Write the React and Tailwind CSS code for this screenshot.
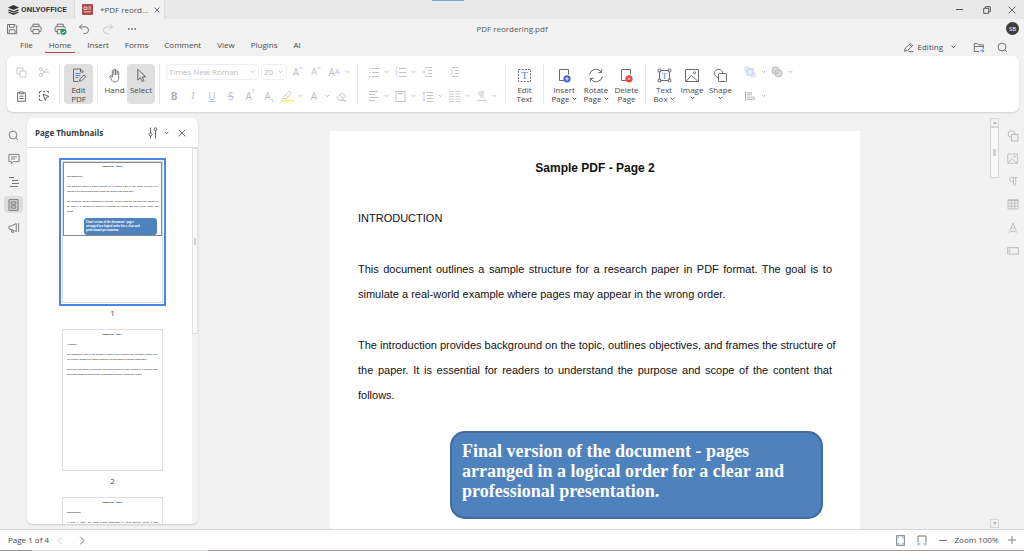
import clsx from 'clsx'

const Icon = ({ w = 12, h = w, box, className, children }) => (
  <svg
    width={w}
    height={h}
    viewBox={box || `0 0 ${w} ${h}`}
    fill="none"
    stroke="currentColor"
    aria-hidden="true"
    className={clsx('shrink-0', className)}
  >
    {children}
  </svg>
)

const Chevron = ({ className }) => (
  <Icon w={5} h={4} className={className}>
    <path d="M0.7 0.8 2.5 2.7 4.3 0.8" />
  </Icon>
)

const icons = {
  stack: (
    <Icon w={11} h={10} className="text-[#333333]">
      <path d="M5.5 0 11 2.5 5.5 5 0 2.5Z" fill="currentColor" stroke="none" />
      <path d="M0.5 4.8 5.5 7 10.5 4.8M0.5 7 5.5 9.2 10.5 7" strokeWidth="1.3" />
    </Icon>
  ),
  pdfTab: (
    <Icon w={11}>
      <rect width="11" height="11" rx="1" fill="#b04a4a" stroke="none" />
      <path d="M2 3h3v2.5H2zM6.3 3H9M6.3 5H9M2 7.8h7" stroke="#f3dada" strokeWidth="0.9" />
    </Icon>
  ),
  save: (
    <Icon w={12}>
      <path d="M1.5 1.5h7.6l1.6 1.6v7.6H1.5zM3.5 1.5v2.8h4.7V1.5M3.2 10.5V6.8h5.8v3.7" strokeWidth="0.9" />
    </Icon>
  ),
  print: (
    <Icon w={12}>
      <path d="M3 3.6V1.2h6v2.4M3 8.6H1.7q-.8 0-.8-.8V4.6q0-.9.9-.9h8.4q.9 0 .9.9v3.2q0 .8-.8.8H9M3 6.5h6v4.2H3z" strokeWidth="0.9" />
    </Icon>
  ),
  quickPrint: (
    <Icon w={13} h={12}>
      <path d="M3.2 3.6V1.2h6v2.4M3.2 8.6H1.9q-.8 0-.8-.8V4.6q0-.9.9-.9h8.4q.9 0 .9.9v1M3.2 10.7V6.5h5M3.2 10.7h2.6" strokeWidth="0.9" />
      <circle cx="9.4" cy="8.8" r="3.1" fill="#2f9a60" stroke="none" />
      <path d="m8 8.8 1.1 1.1 1.8-2" stroke="#fff" strokeWidth="0.9" />
    </Icon>
  ),
  undo: (
    <Icon w={12}>
      <path d="M4.2 1.2 1.5 3.9l2.7 2.7M1.6 3.9h5.6a3.3 3.3 0 0 1 0 6.6H5.4" strokeWidth="0.9" />
    </Icon>
  ),
  redo: (
    <Icon w={12}>
      <path d="m7.8 1.2 2.7 2.7-2.7 2.7M10.4 3.9H4.8a3.3 3.3 0 0 0 0 6.6h1.8" strokeWidth="0.9" />
    </Icon>
  ),
  more: (
    <Icon w={10} h={4}>
      <path d="M1 2h1.6M4.2 2h1.6M7.4 2H9" strokeWidth="1.6" />
    </Icon>
  ),
  copy: (
    <Icon w={11}>
      <path d="M3.5 7H1V1h6v2.5M4 4h6v6H4z" strokeWidth="0.9" />
    </Icon>
  ),
  cut: (
    <Icon w={12}>
      <circle cx="3" cy="3.2" r="1.6" strokeWidth="0.9" />
      <circle cx="3" cy="9" r="1.6" strokeWidth="0.9" />
      <path d="m4.3 4.2 2 1.9H11M4.3 8l5-5.5" strokeWidth="0.9" />
    </Icon>
  ),
  paste: (
    <Icon w={11}>
      <path d="M3.5 1.7H1.6v8.6h7.8V1.7H7.5M3.6 1h3.8v1.8H3.6zM3.5 5.2h4M3.5 7.5h4" />
    </Icon>
  ),
  selectAll: (
    <Icon w={12}>
      <path d="M1.5 3.5v-2h2M5 1.5h2M8.5 1.5h2v1.5M1.5 5v2M1.5 8.5v2h2" />
      <path d="m5 4.3 6 2.2-2.6 1-1.1 2.9Z" />
    </Icon>
  ),
  editPdf: (
    <Icon w={14} h={15}>
      <path d="M11.5 4V3.8L8.7 1H1.5v12.5h5M8.5 1v3h3" />
      <path d="M3.5 5.5h5M3.5 7.5h5M3.5 9.5h3" stroke="#5b87dc" />
      <path d="m7.5 13.3.6-2.4 4-4 1.7 1.7-4 4Z" />
    </Icon>
  ),
  hand: (
    <Icon w={12} h={15}>
      <path
        d="M3.3 8V3.2a.8.8 0 0 1 1.6 0V7M4.9 3V1.8a.8.8 0 0 1 1.6 0V7M6.5 3a.8.8 0 0 1 1.6 0v4M8.1 4.2a.8.8 0 0 1 1.6 0v5.3c0 3-1.3 4.5-3.6 4.5-2 0-2.8-.8-3.6-2.4L.9 8.6c-.3-.8.8-1.5 1.4-.7l1 1.3V7"
        strokeWidth="0.9"
      />
    </Icon>
  ),
  pointer: (
    <Icon w={11} h={15}>
      <path d="M1.8 1.3v10.8l2.6-2.5 1.7 3.9 1.9-.8-1.7-3.8 3.4-.2Z" />
    </Icon>
  ),
  editText: (
    <Icon w={15}>
      <rect x="1.5" y="1.5" width="12" height="12" strokeDasharray="2 1.2" />
      <text x="7.5" y="11" textAnchor="middle" fill="#5f86da" stroke="none" fontFamily="Liberation Serif" fontSize="11">T</text>
    </Icon>
  ),
  insertPage: (
    <Icon w={13} h={15}>
      <path d="M6.5 12.5h-5v-11h9v5" />
      <circle cx="9" cy="10.8" r="3.6" fill="#3f69c9" stroke="none" />
      <path d="M9 9v3.6M7.2 10.8h3.6" stroke="#fff" strokeWidth="0.9" />
    </Icon>
  ),
  rotatePage: (
    <Icon w={16} h={15}>
      <path d="M1.6 6.6A6.3 6.3 0 0 1 13.2 4.3M13.6 1.4v3.2h-3.3M14.4 8.4A6.3 6.3 0 0 1 2.8 10.7M2.4 13.6v-3.2h3.3" />
    </Icon>
  ),
  deletePage: (
    <Icon w={13} h={15}>
      <path d="M6.5 12.5h-5v-11h9v5" />
      <circle cx="9" cy="10.8" r="3.6" fill="#ea4343" stroke="none" />
      <path d="m7.9 9.7 2.2 2.2M10.1 9.7l-2.2 2.2" stroke="#fff" strokeWidth="0.8" />
    </Icon>
  ),
  textBox: (
    <Icon w={15}>
      <path d="M3.5 2.5h8M3.5 12.5h8M2.5 3.5v8M12.5 3.5v8" />
      <path d="M1.2 1.2h2.6v2.6H1.2zM11.2 1.2h2.6v2.6h-2.6zM1.2 11.2h2.6v2.6H1.2zM11.2 11.2h2.6v2.6h-2.6z" strokeWidth="0.9" />
      <text x="7.5" y="10.7" textAnchor="middle" fill="#5f86da" stroke="none" fontFamily="Liberation Serif" fontSize="9">T</text>
    </Icon>
  ),
  image: (
    <Icon w={14} h={15}>
      <path d="M.5 1.5h13v12H.5zM1.2 13.2 6.4 7.4l6.4 5.8" />
      <circle cx="9.6" cy="4.8" r="1.1" strokeWidth="0.9" />
    </Icon>
  ),
  shape: (
    <Icon w={15}>
      <path d="M5.5 9.4A4.1 4.1 0 1 1 9.7 5.5" />
      <rect x="5.5" y="5.5" width="8" height="8" rx="0.8" />
    </Icon>
  ),
  arrange: (
    <Icon w={12}>
      <path d="M3 4.9H1V1h4v2M9 7.1h2V11H7V9" stroke="#d2d2d2" strokeWidth="0.8" />
      <rect x="3" y="3" width="6" height="6" fill="#e4ecfc" stroke="#b4c8f2" />
    </Icon>
  ),
  merge: (
    <Icon w={12}>
      <circle cx="4.5" cy="4.5" r="3.6" fill="#dedede" />
      <circle cx="7.5" cy="7.3" r="3.6" fill="#dedede" />
      <path d="M4.5 8.1A3.6 3.6 0 0 0 8 4" />
    </Icon>
  ),
  alignObjects: (
    <Icon w={12}>
      <path d="M1.5 1v10" />
      <path d="M3.3 2.5h4v2.6h-4zM3.3 7h7v2.6h-7z" fill="#e6e6e6" strokeWidth="0.8" />
    </Icon>
  ),
  bullets: (
    <Icon w={11} h={10}>
      <path d="M4 1.5h7M4 5.5h7M4 9.5h7" />
      <path d="M1 1.5h1.4M1 5.5h1.4M1 9.5h1.4" stroke="#a9bfee" />
    </Icon>
  ),
  numbering: (
    <Icon w={11} h={10}>
      <path d="M4 1.5h7M4 5.5h7M4 9.5h7" />
      <path d="M1.5 0v2.6M.6 4.5h1.6v1.2L.7 7h1.6M1 9.3h1.4" stroke="#a9bfee" strokeWidth="0.7" />
    </Icon>
  ),
  outdent: (
    <Icon w={11} h={10}>
      <path d="M3 .5h7M6 3.5h4M6 6.5h4M3 9.5h7" />
      <path d="M3.6 3 1.4 5l2.2 2" stroke="#a9bfee" />
    </Icon>
  ),
  indent: (
    <Icon w={11} h={10}>
      <path d="M3 .5h7M6 3.5h4M6 6.5h4M3 9.5h7" />
      <path d="M1.4 3 3.6 5 1.4 7" stroke="#a9bfee" />
    </Icon>
  ),
  alignLeft: (
    <Icon w={11} h={10}>
      <path d="M1 .5h9M1 3.5h6M1 6.5h9M1 9.5h6" />
    </Icon>
  ),
  alignTop: (
    <Icon w={11}>
      <rect x="1" y="0.5" width="9" height="10" />
      <path d="M3 2.5h5" stroke="#a9bfee" />
    </Icon>
  ),
  lineSpacing: (
    <Icon w={11}>
      <path d="M5 1.5h6M5 4.5h6M5 7.5h6M5 10.5h6" />
      <path d="M2 1v9M.7 2.3 2 1l1.3 1.3M.7 8.7 2 10l1.3-1.3" stroke="#a9bfee" strokeWidth="0.8" />
    </Icon>
  ),
  columns: (
    <Icon w={13} h={11}>
      <path d="M1 .5h5M7.5.5h5M1 3h5M7.5 3h5M1 5.5h5M7.5 5.5h5M1 8h5M7.5 8h5M1 10.5h5M7.5 10.5h5" strokeWidth="0.8" />
    </Icon>
  ),
  highlight: (
    <Icon w={13} h={12}>
      <path d="M2 7.5 4.3 5l2.4 2.3-1.5 1.2H1.5M4.5 4.8 8.5.8l2 2L6.9 7.1" strokeWidth="0.8" />
      <rect y="9.6" width="13" height="2" fill="#f6f67c" stroke="none" />
    </Icon>
  ),
  eraser: (
    <Icon w={11}>
      <path d="m1.2 6.3 4.9-4.6 3.8 3.5-4.2 4H3.2L1.2 7.4ZM3.6 4.1l4 3.6M5.5 9.5h4.8" strokeWidth="0.9" />
    </Icon>
  ),
  pencil: (
    <Icon w={11}>
      <path d="m1.5 9.2.8-3L7.5 1.4 9.7 3.5 4.6 8.5ZM6.4 2.4l2.2 2.2M5.5 9.7h5" strokeWidth="0.8" />
    </Icon>
  ),
  folder: (
    <Icon w={12} h={11}>
      <path d="M6 9.5H1.3v-8h3l1 1.3h5v4M1.3 4.5h9" strokeWidth="0.9" />
      <path d="M6.8 8.8h4M9.3 7.2l1.6 1.6-1.6 1.6" stroke="#4c7be0" strokeWidth="0.9" />
    </Icon>
  ),
  search: (
    <Icon w={11}>
      <circle cx="5" cy="5" r="3.9" strokeWidth="0.9" />
      <path d="M7.8 7.8 10 10" strokeWidth="0.9" />
    </Icon>
  ),
  comments: (
    <Icon w={12}>
      <path d="M.9 1.4h10.2v7.2H5.4L3.4 10.6v-2H.9zM3 3.9h6M3 6h4" strokeWidth="0.9" />
    </Icon>
  ),
  headings: (
    <Icon w={12}>
      <path d="M1 1.5h5M4 4.5h6M4 7.5h7M2 10.5h8" />
    </Icon>
  ),
  thumbs: (
    <Icon w={11} h={12}>
      <path d="M1 .7h9v10.6H1zM3.2 2.9h4.6v2.3H3.2zM3.2 6.8h4.6v2.3H3.2z" />
    </Icon>
  ),
  feedback: (
    <Icon w={12}>
      <path d="M1 4.2h1.8L8.3 1.6v8L2.8 7.2H1zM3 7.4l.8 3h1.8l-.8-2.3M10.6 1.2v8.9" strokeWidth="0.9" />
    </Icon>
  ),
  sliders: (
    <Icon w={10} h={12}>
      <path d="M2.5.5v5.4M2.5 9v2.5M7.5 3.2v8.3" />
      <circle cx="2.5" cy="7.5" r="1.5" />
      <circle cx="7.5" cy="2.2" r="1.4" />
    </Icon>
  ),
  close: (
    <Icon w={8}>
      <path d="m.6.6 6.8 6.8M7.4.6.6 7.4" strokeWidth="0.9" />
    </Icon>
  ),
  closeSmall: (
    <Icon w={6}>
      <path d="m.5.5 5 5M5.5.5l-5 5" strokeWidth="0.8" />
    </Icon>
  ),
  minimize: (
    <Icon w={7}>
      <path d="M0 3.5h7" />
    </Icon>
  ),
  restore: (
    <Icon w={8}>
      <path d="M.7 2.3h5v5h-5zM2.3 2.2V.7h5v5H5.8" />
    </Icon>
  ),
  prev: (
    <Icon w={6} h={9}>
      <path d="M4.8.7 1 4.5l3.8 3.8" strokeWidth="0.9" />
    </Icon>
  ),
  next: (
    <Icon w={6} h={9}>
      <path d="M1.2.7 5 4.5 1.2 8.3" strokeWidth="0.9" />
    </Icon>
  ),
  fitPage: (
    <Icon w={9} h={11}>
      <rect x="0.7" y="0.7" width="7.6" height="9.6" />
      <path d="M2 3.2V2h1.2M5.8 2H7v1.2M7 7.8V9H5.8M3.2 9H2V7.8" stroke="#6b93ea" strokeWidth="0.8" />
    </Icon>
  ),
  fitWidth: (
    <Icon w={10} h={11}>
      <path d="M1 7V1h8v6" />
      <path d="M.6 9h3M6.4 9h3M2 7.7.6 9 2 10.3M8 7.7 9.4 9 8 10.3" stroke="#6b93ea" strokeWidth="0.8" />
    </Icon>
  ),
  minus: (
    <Icon w={8} h={9}>
      <path d="M0 4.5h8" />
    </Icon>
  ),
  plus: (
    <Icon w={8}>
      <path d="M0 4h8M4 0v8" strokeWidth="0.9" />
    </Icon>
  ),
  shapeSettings: (
    <Icon w={12}>
      <path d="M4.5 7.4A3.4 3.4 0 1 1 7.9 4.2" />
      <rect x="4.6" y="4.6" width="6.4" height="6.4" />
    </Icon>
  ),
  imageSettings: (
    <Icon w={11}>
      <path d="M.8 1h9.6v9.2H.8zM1 10l3.6-4.3L10.2 10" strokeWidth="0.9" />
      <circle cx="7.5" cy="3.6" r="0.8" strokeWidth="0.8" />
    </Icon>
  ),
  paragraphSettings: (
    <Icon w={10} h={11}>
      <path d="M9.5 1.5H3.6a2 2 0 0 0 0 4H5M5.5 1.5V9.5M7.7 1.5V9.5" strokeWidth="0.9" />
    </Icon>
  ),
  tableSettings: (
    <Icon w={12} h={11}>
      <path d="M1 1h10v9H1zM1 4.2h10M1 7.1h10M4.3 2v8M7.7 2v8" strokeWidth="0.9" />
      <path d="M.6 1.3h10.8" strokeWidth="1.6" />
    </Icon>
  ),
  textArtSettings: (
    <Icon w={10} h={11}>
      <path d="M2 8.3 5 1l3 7.3M3 6h4M.8 10.2q4.2-2.4 8.4 0" strokeWidth="0.9" />
    </Icon>
  ),
  fieldSettings: (
    <Icon w={12} h={8}>
      <rect x="0.7" y="0.7" width="10.6" height="6.4" />
      <path d="M2.6 2v4" stroke="#c3cdea" strokeWidth="1.4" />
    </Icon>
  ),
}

const IconButton = ({ label, className, children }) => (
  <button type="button" aria-label={label} className={clsx('flex items-center justify-center shrink-0', className)}>
    {children}
  </button>
)

const Separator = () => <div className="w-px h-10 mx-1 shrink-0 bg-[#e8e8e8]" />

// Big ribbon button: icon on top, one or two lines of label under it
const BigButton = ({ icon, lines, menu, active, className }) => (
  <button
    type="button"
    className={clsx(
      'flex flex-col items-center shrink-0 h-10 pt-1 rounded-sm text-[8px] leading-[9px] text-[#4a4a4a]',
      active && 'bg-[#dfdfdf]',
      className
    )}
  >
    <span className="flex h-[15px] mb-0.5 items-center text-[#6a6a6a]">{icon}</span>
    {lines.map((line, i) => (
      <span key={line} className="flex items-center gap-0.5 whitespace-nowrap">
        {line}
        {menu && lines.length > 1 && i === lines.length - 1 && <Chevron />}
      </span>
    ))}
    {menu && lines.length === 1 && <Chevron className="mt-0.5" />}
  </button>
)

// Small ribbon tool with an optional drop-down arrow
const Tool = ({ label, menu, wide, children }) => (
  <button type="button" aria-label={label} className={clsx('flex items-center shrink-0 h-4', wide && 'w-[27px]')}>
    <span className="flex items-center justify-center w-3.5">{children}</span>
    {menu && (
      <span className="flex items-center justify-center w-[13px]">
        <Chevron />
      </span>
    )}
  </button>
)

const Combo = ({ label, value, className }) => (
  <div className={clsx('flex items-center shrink-0 h-4 pl-0.5 pr-[3px] border border-[#eeeeee] rounded-sm', className)}>
    <select aria-label={label} defaultValue={value} className="flex-1 min-w-0 appearance-none bg-transparent text-[8px] leading-3 text-[#bdbdbd]">
      <option>{value}</option>
    </select>
    <Chevron className="pointer-events-none" />
  </div>
)

const Caret = ({ d }) => (
  <Icon w={4} h={4} className="self-start text-[#a9bfee]">
    <path d={d} strokeWidth="0.8" />
  </Icon>
)

const TitleBar = () => (
  <div className="relative flex h-[19px] bg-[#e9e9e9] text-[#555555]">
    <button type="button" className="flex items-center gap-0.5 w-[75px] pl-2 border-r border-[#dedede] font-['Roboto',sans-serif] font-bold text-[8px] text-[#3a3a3a]">
      {icons.stack}
      ONLYOFFICE
    </button>
    <div className="flex items-center w-[90px] pl-[7px] pr-1 bg-[#f2f2f2] border-r border-[#dedede]">
      {icons.pdfTab}
      <span className="flex-1 pl-[7px] text-[8px]">*PDF reord...</span>
      <IconButton label="Close tab">{icons.closeSmall}</IconButton>
    </div>
    <div className="absolute top-0 left-[432px] w-8 h-px bg-[#6aaee6]" />
    <div className="flex ml-auto">
      <IconButton label="Minimize" className="w-[27px]">{icons.minimize}</IconButton>
      <IconButton label="Restore" className="w-[27px]">{icons.restore}</IconButton>
      <IconButton label="Close" className="w-6">{icons.close}</IconButton>
    </div>
  </div>
)

const QuickAccess = () => (
  <div className="grid grid-cols-[1fr_auto_1fr] items-center h-[19px] text-[#666666]">
    <div className="flex">
      <IconButton label="Save" className="w-6">{icons.save}</IconButton>
      <IconButton label="Print" className="w-6">{icons.print}</IconButton>
      <IconButton label="Quick print" className="w-6">{icons.quickPrint}</IconButton>
      <IconButton label="Undo" className="w-6">{icons.undo}</IconButton>
      <IconButton label="Redo" className="w-6 text-[#c4c4c4]">{icons.redo}</IconButton>
      <IconButton label="More" className="w-6">{icons.more}</IconButton>
    </div>
    <span className="text-[8px] text-[#5a5a5a]">PDF reordering.pdf</span>
    <div className="flex justify-end pr-[5px]">
      <span className="flex items-center justify-center size-[13px] rounded-full bg-[#3d3d3d] text-white text-[6px] leading-none">SB</span>
    </div>
  </div>
)

const tabs = ['File', 'Home', 'Insert', 'Forms', 'Comment', 'View', 'Plugins', 'AI']

const MenuTabs = () => (
  <nav className="flex justify-between h-[18px] pl-4 pr-4 text-[#4a4a4a]">
    <div className="flex gap-2">
      {tabs.map((tab) => (
        <button
          key={tab}
          type="button"
          className={clsx('h-[15px] px-1 text-[8px] border-b', tab === 'Home' ? 'border-[#b8474a]' : 'border-transparent')}
        >
          {tab}
        </button>
      ))}
    </div>
    <div className="flex items-center text-[#666666]">
      <button type="button" className="flex items-center gap-1 mr-[17px] text-[8px] text-[#4a4a4a]">
        {icons.pencil}
        Editing
        <Chevron className="ml-1" />
      </button>
      <IconButton label="Open file location" className="mr-3">{icons.folder}</IconButton>
      <IconButton label="Search">{icons.search}</IconButton>
    </div>
  </nav>
)

const Ribbon = () => (
  <div className="flex items-start h-14 pt-2 pl-[3px] mr-[5px] ml-[7px] bg-white rounded-md shadow-[0_1px_2px_rgba(0,0,0,0.14)]">
    <div className="grid grid-cols-2 gap-y-2 w-[45px] h-10 content-center shrink-0">
      <IconButton label="Copy" className="h-4 text-[#c4c4c4]">{icons.copy}</IconButton>
      <IconButton label="Cut" className="h-4 text-[#c4c4c4]">{icons.cut}</IconButton>
      <IconButton label="Paste" className="h-4 text-[#6a6a6a]">{icons.paste}</IconButton>
      <IconButton label="Select all" className="h-4 text-[#6a6a6a]">{icons.selectAll}</IconButton>
    </div>
    <Separator />
    <BigButton icon={icons.editPdf} lines={['Edit', 'PDF']} active className="w-[29px]" />
    <Separator />
    <BigButton icon={icons.hand} lines={['Hand']} className="w-[25px]" />
    <BigButton icon={icons.pointer} lines={['Select']} active className="w-7" />
    <Separator />

    <div className="flex flex-col justify-center gap-2 h-10 w-[189px] pl-0.5 shrink-0 text-[#bdbdbd]">
      <div className="flex items-center">
        <Combo label="Font" value="Times New Roman" className="w-[93px]" />
        <Combo label="Font size" value="20" className="ml-0.5 mr-1 w-[26px]" />
        <div className="flex gap-1">
          <Tool label="Increase font size">
            <span className="text-[10px] leading-3">A</span>
            <Caret d="M.5 3 2 1.2 3.5 3" />
          </Tool>
          <Tool label="Decrease font size">
            <span className="text-[9px] leading-3">A</span>
            <Caret d="M.5 1 2 2.8 3.5 1" />
          </Tool>
          <Tool label="Change case" menu>
            <span className="text-[10px] leading-3">A</span>
            <span className="text-[7px] leading-3 text-[#a9bfee]">A</span>
          </Tool>
        </div>
      </div>
      <div className="flex items-center pl-px text-[10px] leading-4">
        <div className="flex gap-[5px] mr-1">
          <Tool label="Bold"><b className="text-[#b0b0b0]">B</b></Tool>
          <Tool label="Italic"><i className="font-['Liberation_Serif',serif]">I</i></Tool>
          <Tool label="Underline"><u className="decoration-[#a9bfee]">U</u></Tool>
          <Tool label="Strikethrough"><s className="decoration-[#a9bfee]">S</s></Tool>
          <Tool label="Superscript">
            A<span className="self-start text-[5px] leading-[6px] text-[#8fabeb]">1</span>
          </Tool>
          <Tool label="Subscript">
            A<span className="self-end text-[5px] leading-[6px] text-[#8fabeb]">1</span>
          </Tool>
        </div>
        <Tool label="Highlight color" menu>{icons.highlight}</Tool>
        <Tool label="Font color" menu>A</Tool>
        <Tool label="Clear style">{icons.eraser}</Tool>
      </div>
    </div>
    <Separator />

    <div className="flex flex-col justify-center gap-2 h-10 w-[139px] pl-1 shrink-0 text-[#c2c2c2]">
      <div className="flex">
        <Tool label="Bullets" menu wide>{icons.bullets}</Tool>
        <Tool label="Numbering" menu wide>{icons.numbering}</Tool>
        <Tool label="Decrease indent" wide>{icons.outdent}</Tool>
        <Tool label="Increase indent" wide>{icons.indent}</Tool>
      </div>
      <div className="flex">
        <Tool label="Horizontal align" menu wide>{icons.alignLeft}</Tool>
        <Tool label="Vertical align" menu wide>{icons.alignTop}</Tool>
        <Tool label="Line spacing" menu wide>{icons.lineSpacing}</Tool>
        <Tool label="Columns" menu wide>{icons.columns}</Tool>
        <Tool label="Text direction" menu wide>
          <Icon w={11}>
            <path d="M8 .8H4.2a1.7 1.7 0 0 0 0 3.4H5M5.2.8v6.4M7 .8v6.4" strokeWidth="0.8" />
            <path d="M1 9.4h9M8.7 8.2 10 9.4l-1.3 1.2" stroke="#a9bfee" strokeWidth="0.8" />
          </Icon>
        </Tool>
      </div>
    </div>
    <Separator />
    <BigButton icon={icons.editText} lines={['Edit', 'Text']} className="w-[29px]" />
    <Separator />
    <BigButton icon={icons.insertPage} lines={['Insert', 'Page']} menu className="w-8" />
    <BigButton icon={icons.rotatePage} lines={['Rotate', 'Page']} menu className="w-8" />
    <BigButton icon={icons.deletePage} lines={['Delete', 'Page']} className="w-[29px]" />
    <Separator />
    <BigButton icon={icons.textBox} lines={['Text', 'Box']} menu className="w-7" />
    <BigButton icon={icons.image} lines={['Image']} menu className="w-7" />
    <BigButton icon={icons.shape} lines={['Shape']} menu className="w-[29px]" />
    <div className="flex flex-col justify-center gap-2 h-10 ml-2 shrink-0 text-[#b8b8b8]">
      <div className="flex">
        <Tool label="Arrange" menu wide>{icons.arrange}</Tool>
        <Tool label="Merge shapes" menu wide>{icons.merge}</Tool>
      </div>
      <Tool label="Align objects" menu wide>{icons.alignObjects}</Tool>
    </div>
  </div>
)

const leftPanels = [
  { label: 'Find', icon: icons.search },
  { label: 'Comments', icon: icons.comments },
  { label: 'Headings', icon: icons.headings },
  { label: 'Page thumbnails', icon: icons.thumbs, active: true },
  { label: 'Feedback', icon: icons.feedback },
]

const rightPanels = [
  { label: 'Shape settings', icon: icons.shapeSettings },
  { label: 'Image settings', icon: icons.imageSettings },
  { label: 'Paragraph settings', icon: icons.paragraphSettings },
  { label: 'Table settings', icon: icons.tableSettings },
  { label: 'Text art settings', icon: icons.textArtSettings },
  { label: 'Field settings', icon: icons.fieldSettings },
]

const Rail = ({ items, className }) => (
  <div className={clsx('flex flex-col gap-1.5 shrink-0 pt-[15px]', className)}>
    {items.map((item) => (
      <IconButton key={item.label} label={item.label} className={clsx('w-[19px] h-[17px] rounded-sm', item.active && 'bg-[#dddddd]')}>
        {item.icon}
      </IconButton>
    ))}
  </div>
)

const pages = [
  {
    number: 1,
    title: 'Sample PDF - Page 2',
    heading: 'INTRODUCTION',
    paragraphs: [
      [
        'This document outlines a sample structure for a research paper in PDF format. The goal is to',
        'simulate a real-world example where pages may appear in the wrong order.',
      ],
      [
        'The introduction provides background on the topic, outlines objectives, and frames the structure of',
        'the paper. It is essential for readers to understand the purpose and scope of the content that',
        'follows.',
      ],
    ],
    note: ['Final version of the document - pages', 'arranged in a logical order for a clear and', 'professional presentation.'],
  },
  {
    number: 2,
    title: 'Sample PDF - Page 4',
    heading: 'APPENDIX',
    paragraphs: [
      [
        'The methodology used in this document creation involved manual PDF generation through code.',
        'We created a shuffled set of pages to simulate real-world issues in document organization.',
      ],
      [
        'Each page was edited experimentally with specific content to mimic sections of a research paper.',
        'This enables testing of drag and drop reorganization features in various PDF editors.',
      ],
    ],
  },
  {
    title: 'Sample PDF - Page 3',
    heading: 'REFERENCES',
    paragraphs: [['1. Smith, J. (2020). The Impact of Data Organization on Analyst Efficiency. Journal of Data']],
  },
]

const Lines = ({ lines, alone }) =>
  lines.map((line, i) => (
    <span key={line} className={clsx('block whitespace-nowrap', (alone || i < lines.length - 1) && '[text-align-last:justify]')}>
      {line}
    </span>
  ))

const Thumbnail = ({ page, selected }) => (
  <button type="button" className="block w-[107px]">
    <div className={clsx('h-[148px] p-px border-2', selected ? 'border-[#4a86e8]' : 'border-transparent')}>
      <div className="relative h-full px-1 pt-0.5 overflow-hidden bg-white border border-[#dddddd] font-['Liberation_Sans',sans-serif] text-[2px] leading-[5px] text-left text-black">
        {selected && <div className="absolute inset-x-0 top-0 h-[74px] border border-[#888888]" />}
        <p className="font-bold text-center">{page.title}</p>
        <p className="mt-[5px]">{page.heading}</p>
        {page.paragraphs.map((lines) => (
          <p key={lines[0]} className="mt-[5px]">
            <Lines lines={lines} alone={lines.length === 1} />
          </p>
        ))}
        {page.note && (
          <div className="mt-1 ml-[17px] mr-px h-[17px] pl-0.5 pt-0.5 rounded-[3px] bg-[#4f81bd] font-['Liberation_Serif',serif] font-bold text-[3px] leading-1 text-white">
            {page.note.map((line) => <span key={line} className="block whitespace-nowrap">{line}</span>)}
          </div>
        )}
      </div>
    </div>
    {page.number && <span className="block text-[8px] leading-[14px] text-[#4a4a4a]">{page.number}</span>}
  </button>
)

const ThumbnailPanel = () => (
  <aside className="flex flex-col w-[171px] mt-1.5 mb-[5px] mr-0.5 shrink-0 overflow-hidden bg-white rounded-md shadow-[0_1px_2px_rgba(0,0,0,0.16)]">
    <div className="flex items-center h-[30px] pl-2 pr-3 shrink-0 border-b border-[#dddddd] text-[#666666]">
      <h2 className="flex-1 text-[8px] font-bold text-[#3a3a3a]">Page Thumbnails</h2>
      <button type="button" aria-label="Thumbnail settings" className="flex items-center gap-1.5 mr-[9px]">
        {icons.sliders}
        <Chevron />
      </button>
      <IconButton label="Close panel">{icons.close}</IconButton>
    </div>
    <div className="flex flex-1 min-h-0">
      <div className="flex flex-col items-center gap-1.5 flex-1 pt-2.5 pl-1.5 overflow-hidden">
        {pages.map((page, i) => (
          <Thumbnail key={page.title} page={page} selected={i === 0} />
        ))}
      </div>
      <div className="w-1.5 bg-[#f3f3f3]">
        <div className="flex items-center justify-center h-[186px] bg-[#fafafa] border border-[#e0e0e0]">
          <div className="w-0.5 h-[7px] bg-[#d0d0d0]" />
        </div>
      </div>
    </div>
  </aside>
)

const DocumentPage = ({ page }) => (
  <article className="w-[530px] shrink-0 self-start min-h-full px-7 pt-[25px] bg-white font-['Liberation_Sans',sans-serif] text-[11px] leading-[25px] text-[#111111]">
    <h1 className="text-[12px] font-bold text-center">{page.title}</h1>
    <p className="mt-[25px]">{page.heading}</p>
    {page.paragraphs.map((lines) => (
      <p key={lines[0]} className="mt-[26px]">
        <Lines lines={lines} />
      </p>
    ))}
    <div className="h-[88px] mt-[23px] ml-[92px] mr-[9px] pt-2 pl-2.5 rounded-[15px] border-2 border-[#416a9f] bg-[#4f81bd] font-['Liberation_Serif',serif] text-[18px] leading-[20px] font-bold text-white">
      {page.note.map((line) => <span key={line} className="block whitespace-nowrap">{line}</span>)}
    </div>
  </article>
)

const ScrollBar = () => (
  <div className="flex flex-col w-[9px] pt-1.5 pb-px shrink-0 text-[#b0b0b0]">
    <IconButton label="Scroll up" className="h-[9px] border border-[#d6d6d6]">
      <Icon w={4} h={3}><path d="M0 3 2 .5 4 3Z" fill="currentColor" stroke="none" /></Icon>
    </IconButton>
    <div className="flex items-center justify-center h-[51px] bg-[#f8f8f8] border border-[#d6d6d6]">
      <div className="w-[3px] h-[7px] bg-[#d0d0d0]" />
    </div>
    <IconButton label="Scroll down" className="h-[9px] mt-auto border border-[#d6d6d6]">
      <Icon w={4} h={3}><path d="M0 0 2 2.5 4 0Z" fill="currentColor" stroke="none" /></Icon>
    </IconButton>
  </div>
)

const StatusBar = () => (
  <footer className="shrink-0 bg-white border-t border-[#d8d8d8] text-[8px] text-[#4a4a4a]">
    <div className="flex items-center h-5 px-2">
      <span className="w-[41px] whitespace-nowrap">Page 1 of 4</span>
      <IconButton label="Previous page" className="w-[22px] text-[#c4c4c4]">{icons.prev}</IconButton>
      <IconButton label="Next page" className="w-[22px] text-[#666666]">{icons.next}</IconButton>
      <div className="flex items-center ml-auto text-[#777777]">
        <IconButton label="Fit to page" className="w-[21px]">{icons.fitPage}</IconButton>
        <IconButton label="Fit to width" className="w-[21px]">{icons.fitWidth}</IconButton>
        <IconButton label="Zoom out" className="w-[21px]">{icons.minus}</IconButton>
        <button type="button" className="w-[47px] text-center whitespace-nowrap text-[#4a4a4a]">Zoom 100%</button>
        <IconButton label="Zoom in" className="ml-2">{icons.plus}</IconButton>
      </div>
    </div>
    <div className="flex h-px bg-[#a39b98]">
      <div className="w-8 bg-[#a38f8f]" />
      <div className="w-44 bg-[#dcd8d8]" />
    </div>
  </footer>
)

export default function App() {
  return (
    <div className="flex flex-col h-screen overflow-hidden bg-[#f2f2f2] font-['Open_Sans','Noto_Sans',sans-serif] text-[8px]">
      <TitleBar />
      <QuickAccess />
      <MenuTabs />
      <Ribbon />
      <main className="flex flex-1 min-h-0">
        <Rail items={leftPanels} className="w-[27px] pl-1 text-[#777777]" />
        <ThumbnailPanel />
        <div className="flex flex-1 justify-center min-w-0 pt-[19px] overflow-hidden">
          <DocumentPage page={pages[0]} />
        </div>
        <ScrollBar />
        <Rail items={rightPanels} className="w-[25px] pl-1 text-[#bcbcbc]" />
      </main>
      <StatusBar />
    </div>
  )
}
